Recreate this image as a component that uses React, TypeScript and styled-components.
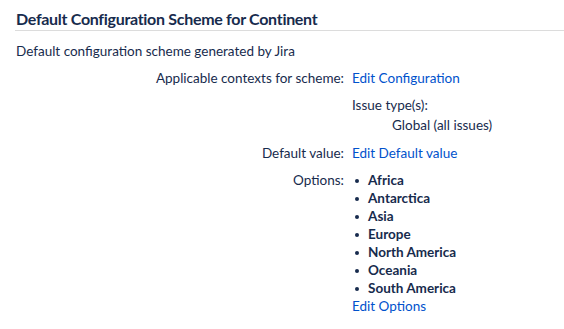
import React from 'react';
import styled, { createGlobalStyle } from 'styled-components';

const GlobalStyle = createGlobalStyle`
  body {
    margin: 0;
    background: #fff;
    font-family: Lato, "Noto Sans", sans-serif;
    color: #172b4d;
  }
`;

const Page = styled.div`
  padding: 9px 0 0 16px;
`;

const Heading = styled.h2`
  margin: 0 0 0 -1px;
  padding: 0 0 1px 1px;
  font-size: 16px;
  font-weight: 700;
  letter-spacing: -0.3px;
  line-height: 20px;
  color: #172b4d;
  border-bottom: 1px solid #dcdcdc;
`;

const Description = styled.p`
  margin: 11px 0 0;
  font-size: 13.5px;
  line-height: 18px;
`;

const Fields = styled.div`
  display: grid;
  grid-template-columns: 328px 1fr;
  column-gap: 8px;
  row-gap: 9px;
  margin-top: 9px;
  font-size: 13.5px;
  line-height: 18px;
`;

const Label = styled.div`
  text-align: right;
  color: #172b4d;
`;

const Value = styled.div`
  display: flex;
  flex-direction: column;
  align-items: flex-start;
`;

const Link = styled.a`
  color: #0052cc;
  text-decoration: none;
  cursor: pointer;
`;

const SubBlock = styled.div`
  margin-top: 9px;
`;

const Indented = styled.div`
  padding: 1px 0 0 40px;
  line-height: 20px;
`;

const OptionList = styled.ul`
  margin: 0;
  padding: 0;
  list-style: none;
`;

const OptionItem = styled.li`
  position: relative;
  padding-left: 16px;
  font-weight: 700;

  &::before {
    content: '';
    position: absolute;
    left: 3px;
    top: 8px;
    width: 4px;
    height: 4px;
    border-radius: 50%;
    background: #172b4d;
  }
`;

const options = ['Africa', 'Antarctica', 'Asia', 'Europe', 'North America', 'Oceania', 'South America'];

export default function App() {
  return (
    <Page>
      <GlobalStyle />
      <Heading>Default Configuration Scheme for Continent</Heading>
      <Description>Default configuration scheme generated by Jira</Description>
      <Fields>
        <Label>Applicable contexts for scheme:</Label>
        <Value>
          <Link>Edit Configuration</Link>
          <SubBlock>
            Issue type(s):
            <Indented>Global (all issues)</Indented>
          </SubBlock>
        </Value>
        <Label>Default value:</Label>
        <Value>
          <Link>Edit Default value</Link>
        </Value>
        <Label>Options:</Label>
        <Value>
          <OptionList>
            {options.map((o) => (
              <OptionItem key={o}>{o}</OptionItem>
            ))}
          </OptionList>
          <Link>Edit Options</Link>
        </Value>
      </Fields>
    </Page>
  );
}
